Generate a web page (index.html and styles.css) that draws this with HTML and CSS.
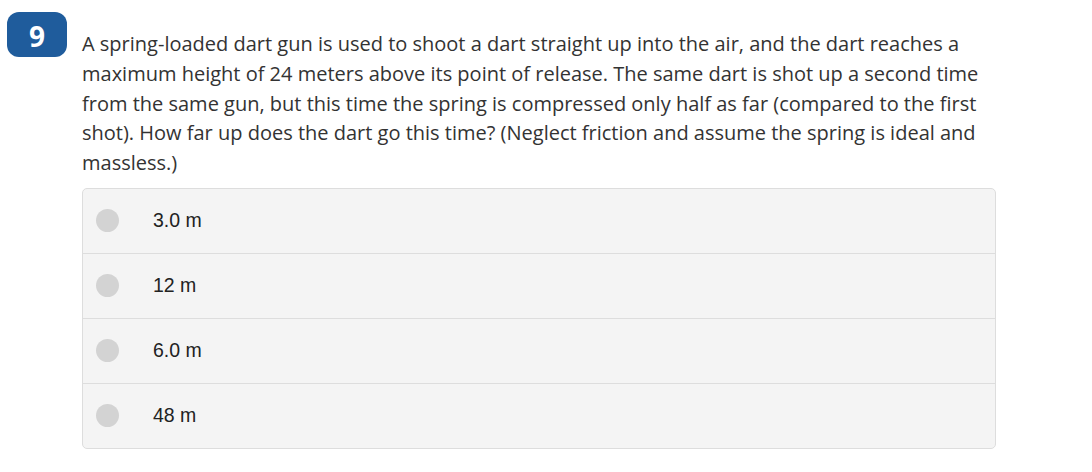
FILE: index.html
```html
<!DOCTYPE html>
<html>
<head>
<meta charset="utf-8">
<link rel="stylesheet" href="styles.css">
</head>
<body>
<div class="question">
  <div class="badge">9</div>
  <div class="content">
    <p class="stem">A spring-loaded dart gun is used to shoot a dart straight up into the air, and the dart reaches a maximum height of 24 meters above its point of release. The same dart is shot up a second time from the same gun, but this time the spring is compressed only half as far (compared to the first shot). How far up does the dart go this time? (Neglect friction and assume the spring is ideal and massless.)</p>
    <div class="options">
      <div class="option"><span class="radio"></span><span class="label">3.0 m</span></div>
      <div class="option"><span class="radio"></span><span class="label">12 m</span></div>
      <div class="option"><span class="radio"></span><span class="label">6.0 m</span></div>
      <div class="option"><span class="radio"></span><span class="label">48 m</span></div>
    </div>
  </div>
</div>
</body>
</html>
```
FILE: styles.css
```css
* { box-sizing: border-box; }
html, body { margin: 0; padding: 0; background: #fff; }
body { font-family: "Open Sans", sans-serif; color: #333; }
.question {
  display: flex;
  align-items: flex-start;
  padding: 12px 0 0 7px;
}
.badge {
  width: 60px;
  height: 45px;
  flex: none;
  background: #1f5c9c;
  color: #fff;
  border-radius: 12px;
  font-weight: 700;
  font-size: 28px;
  line-height: 1;
  padding-top: 2px;
  display: flex;
  align-items: center;
  justify-content: center;
  margin-right: 15px;
}
.content { width: 914px; }
.stem {
  margin: 17px 0 10px 0;
  font-size: 20px;
  line-height: 29.8px;
  color: #333;
}
.options {
  border: 1px solid #dddddd;
  border-radius: 5px;
  background: #f4f4f4;
  overflow: hidden;
}
.option {
  display: flex;
  align-items: center;
  height: 65px;
  border-top: 1px solid #dddddd;
}
.option:first-child { border-top: none; height: 64px; }
.radio {
  width: 23px;
  height: 23px;
  border-radius: 50%;
  background: #d3d3d3;
  margin-left: 13px;
  flex: none;
}
.label {
  margin-left: 34px;
  font-family: "Liberation Sans", Arial, sans-serif;
  font-size: 19.5px;
  color: #222;
}
```
